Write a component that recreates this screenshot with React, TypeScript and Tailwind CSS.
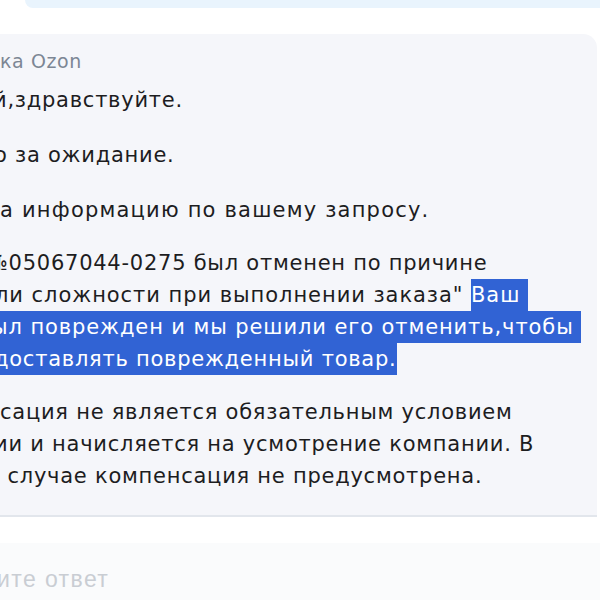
import React from "react";

const Line = ({ children, className = "" }: { children: React.ReactNode; className?: string }) => (
  <div className={"whitespace-nowrap h-[32px] leading-[32px] " + className}>{children}</div>
);

const Sel = ({ children }: { children: React.ReactNode }) => (
  <span className="inline-block h-[32px] leading-[32px] bg-[#3163d4] text-white align-top">{children}</span>
);

export default function App() {
  return (
    <div className="w-[600px] h-[600px] overflow-hidden bg-white flex flex-col" style={{ fontFamily: '"DejaVu Sans", sans-serif' }}>
      <div className="ml-[25px] h-[8px] bg-[#e9f4fd] rounded-bl-[16px] shrink-0" />
      <div className="mt-[26px] mr-[3px] bg-[#f5f6fa] rounded-tr-[14px] border-b-2 border-[#e2e6ec] pt-[11px] pb-[23px] shrink-0 text-[21px] text-[#1d1d1f] tracking-[0.75px]">
        <Line className="text-[#7c8694] text-[19px] tracking-[0.6px]">ка Ozon</Line>
        <div className="mt-[7px]">
          <Line className="-ml-[7px]">й,здравствуйте.</Line>
        </div>
        <div className="mt-[23px]">
          <Line className="-ml-[6px]">о за ожидание.</Line>
        </div>
        <div className="mt-[23px]">
          <Line className="tracking-[1.2px]">а информацию по вашему запросу.</Line>
        </div>
        <div className="mt-[21px]">
          <Line className="-ml-[14px]">№05067044-0275 был отменен по причине</Line>
          <Line className="-ml-[5px] tracking-[0.95px]">
            ли сложности при выполнении заказа" <Sel>Ваш&nbsp;</Sel>
          </Line>
          <Line className="-ml-[9px] tracking-[0.9px]">
            <Sel>ыл поврежден и мы решили его отменить,чтобы&nbsp;</Sel>
          </Line>
          <Line className="-ml-[6px]">
            <Sel>доставлять поврежденный товар.</Sel>
          </Line>
        </div>
        <div className="mt-[21px]">
          <Line>сация не является обязательным условием</Line>
          <Line className="-ml-[6px]">ии и начисляется на усмотрение компании. В</Line>
          <Line>&nbsp;случае компенсация не предусмотрена.</Line>
        </div>
      </div>
      <div className="mt-[26px] flex-1 bg-[#fafbfc] pt-[20px] text-[23px] tracking-[1.4px] text-[#c9cdd3] leading-[32px]" style={{ fontFamily: '"Liberation Sans", Arial, sans-serif' }}>
        <div className="-ml-[3px] whitespace-nowrap">ите ответ</div>
      </div>
    </div>
  );
}
